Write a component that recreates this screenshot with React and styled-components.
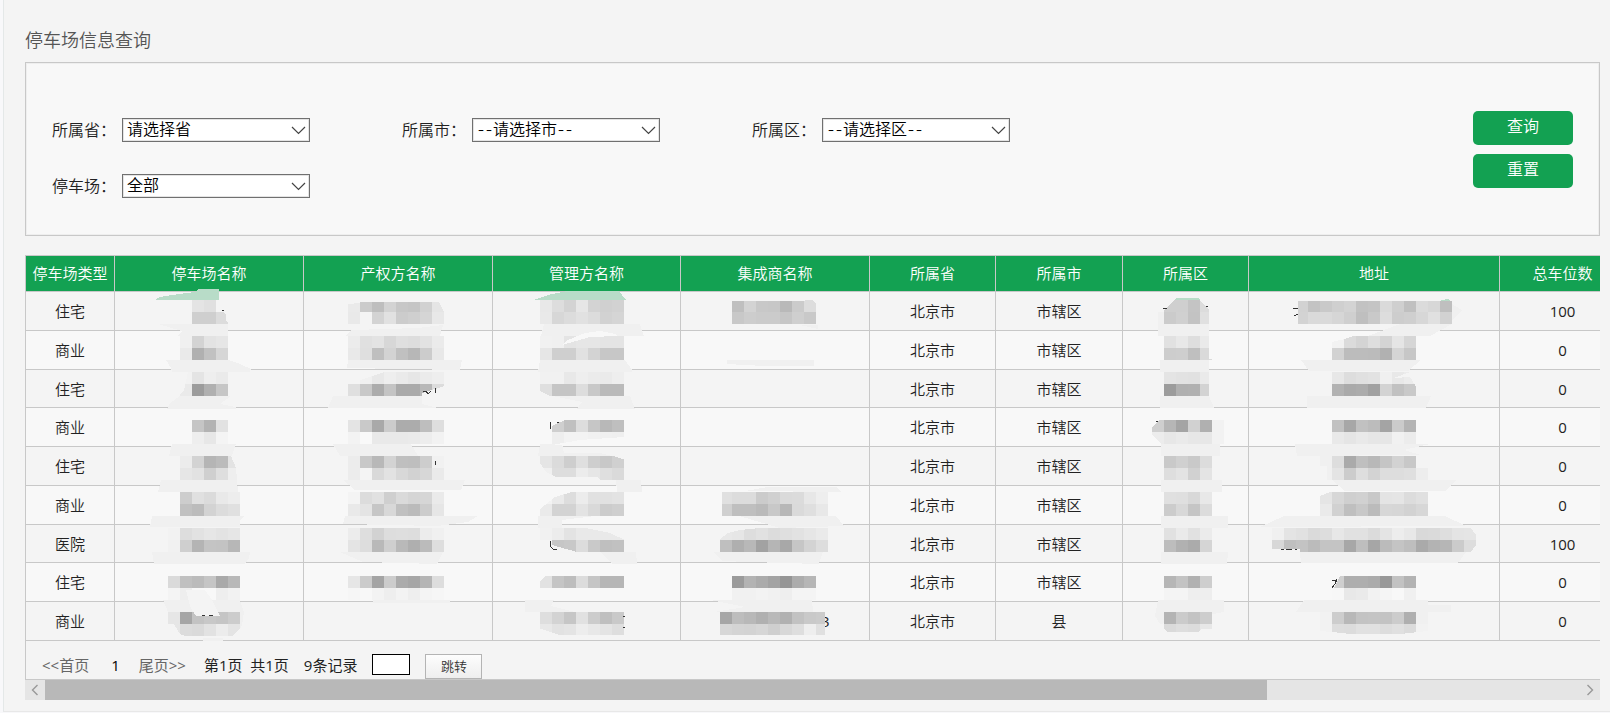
import React from "react"
import styled, { createGlobalStyle } from "styled-components"

const cjk = `"Noto Sans CJK SC", "Noto Sans", sans-serif`
const font = `"Open Sans", ${cjk}`
const green = "#13a152"
const line = "#c8c8c8"

const GlobalStyle = createGlobalStyle`
  * {
    box-sizing: border-box;
  }
  body {
    margin: 0;
    background: #f8f8fa;
    font-family: ${font};
    font-weight: 350;
    font-size: 15px;
    color: #222;
  }
  button, input, select {
    font-family: inherit;
    font-weight: inherit;
    margin: 0;
  }
`

const Page = styled.main`
  margin-left: 3px;
  padding: 26px 10px 11px 21px;
  background: #f4f4f4;
  border-left: 1px solid #e4e8e8;
  border-bottom: 1px solid #e8e8e8;
`

const Title = styled.h1`
  margin: 0 0 8px;
  font-size: 18px;
  font-weight: 350;
  line-height: 28px;
  color: #555;
`

const Filter = styled.form`
  display: flex;
  justify-content: space-between;
  align-items: flex-start;
  min-height: 174px;
  padding: 48px 26px 36px;
  background: #f8f8f8;
  border: 1px solid ${line};
  box-shadow: inset 0 0 0 1px #eeeeee;
`

const Fields = styled.div`
  display: grid;
  grid-template-columns: repeat(3, 350px);
  row-gap: 32px;
  padding-top: 7px;
`

const Field = styled.div`
  display: flex;
  align-items: center;
  height: 24px;
`

const Label = styled.label`
  width: 70px;
  font-size: 16px;
  line-height: 24px;
  white-space: nowrap;
`

const SelectBox = styled.div`
  position: relative;
  width: 188px;
  height: 24px;

  svg {
    position: absolute;
    right: 4px;
    top: 8px;
    pointer-events: none;
  }
`

const Select = styled.select`
  display: block;
  width: 100%;
  height: 24px;
  padding: 0 24px 4px 4px;
  appearance: none;
  border: 1px solid #707070;
  border-radius: 0;
  box-shadow: inset 0 0 0 1px #e4e4e4;
  background: #fff;
  color: #000;
  font-family: ${cjk};
  font-size: 16px;
  line-height: 18px;
  font-feature-settings: "hwid";
`

const Actions = styled.div`
  display: flex;
  flex-direction: column;
  gap: 9px;
`

const ActionButton = styled.button`
  width: 100px;
  height: 34px;
  padding: 0 0 4px;
  border: 0;
  border-radius: 5px;
  background: ${green};
  color: #fff;
  font-size: 16px;
  line-height: 24px;
`

const Result = styled.section`
  position: relative;
  margin-top: 19px;
  overflow: hidden;
  border: solid ${line};
  border-width: 1px 0 1px 1px;
`

const Table = styled.table`
  width: 1600px;
  table-layout: fixed;
  border-collapse: separate;
  border-spacing: 0;
`

const Th = styled.th`
  height: 36px;
  padding: 0 0 1px;
  border-right: 1px solid ${line};
  border-bottom: 1px solid ${line};
  background: ${green};
  color: #fff;
  font-weight: 350;
  line-height: 22px;
  text-align: center;
`

const Row = styled.tr`
  height: 39px;
  background: #f4f4f4;

  &:nth-child(even) {
    background: #f8f8f8;
  }
  &:nth-child(4n + 3) {
    height: 38px;
  }
`

const Td = styled.td`
  padding: 0;
  border-right: 1px solid ${line};
  border-bottom: 1px solid ${line};
  font-weight: ${props => (props.$number ? 400 : 350)};
  line-height: 22px;
  text-align: center;
`

const Mosaic = styled.svg`
  position: absolute;
  top: -1px;
  left: -1px;
  pointer-events: none;
`

const Pager = styled.nav`
  display: flex;
  align-items: flex-start;
  gap: 15px;
  height: 38px;
  padding: 13px 0 0 16px;
  font-weight: 400;
  line-height: 22px;
  white-space: nowrap;
`

const PageLink = styled.a`
  margin-right: 3px;
  color: #666;
  text-decoration: none;
`

const Current = styled.span`
  margin: 0 4px;
  color: #000;
`

const Info = styled.span`
  white-space: pre;
`

const PageInput = styled.input`
  width: 38px;
  height: 21px;
  padding: 0 2px;
  border: 1px solid #000;
  border-radius: 0;
  background: #fff;
`

const JumpButton = styled.button`
  width: 57px;
  height: 25px;
  padding: 0 0 2px;
  border: 1px solid #b4b4b4;
  background: linear-gradient(#fdfdfd, #eeeeee);
  color: #333;
  font-size: 13px;
  font-weight: 350;
  line-height: 20px;
`

const Scrollbar = styled.div`
  display: flex;
  height: 20px;
  background: #e5e5e5;
`

const ScrollButton = styled.button`
  display: flex;
  align-items: center;
  justify-content: center;
  width: 20px;
  height: 20px;
  padding: 0;
  border: 0;
  background: #e5e5e5;
`

const Thumb = styled.div`
  flex: 1222;
  background: #b8b8b8;
`

const Track = styled.div`
  flex: 313;
`

const widths = [89, 189, 189, 188, 189, 126, 127, 126, 251, 126]

const heads = [
  "停车场类型",
  "停车场名称",
  "产权方名称",
  "管理方名称",
  "集成商名称",
  "所属省",
  "所属市",
  "所属区",
  "地址",
  "总车位数",
]

const lots = [
  { type: "住宅", city: "市辖区", total: 100 },
  { type: "商业", city: "市辖区", total: 0 },
  { type: "住宅", city: "市辖区", total: 0 },
  { type: "商业", city: "市辖区", total: 0 },
  { type: "住宅", city: "市辖区", total: 0 },
  { type: "商业", city: "市辖区", total: 0 },
  { type: "医院", city: "市辖区", total: 100 },
  { type: "住宅", city: "市辖区", total: 0 },
  { type: "商业", city: "县", total: 0 },
]

// strips of 12px blocks: x, y, grey levels
const strips = [
  // 停车场名称
  [192, 300, "e4 e0"],
  [192, 312, "cf cf dc"],
  [180, 336, "f0 d3 e3 e6"],
  [180, 348, "ea b0 c1 d6"],
  [180, 372, "f2 e4 ee ea"],
  [180, 384, "ea 9c b0 c6"],
  [192, 420, "c5 b3 e2"],
  [192, 432, "ee e7 f4"],
  [180, 456, "ec d3 b5 bb e3"],
  [180, 468, "e6 e2 cf de ee"],
  [180, 492, "cd e0 db e9 ed"],
  [180, 504, "c1 bc d3 dc e0"],
  [168, 528, "f2 dd e2 e6 e3 e6"],
  [168, 540, "f1 cf b4 c4 c3 b7"],
  [168, 576, "da c0 bb c5 a9 b8"],
  [168, 588, "f4 ee f8 f8 ee f2"],
  [168, 612, "e6 a6 c3 c8 c5 cc"],
  [168, 624, "e6 dc da e2 ec e4"],
  // 产权方名称
  [348, 300, "ea cb be d3 c7 c5 d1 e5"],
  [348, 312, "e9 f4 d3 e1 cc cf d5 e8"],
  [348, 336, "ec e0 e3 d7 df dd e2 eb"],
  [348, 348, "e9 df bf d3 c0 b7 cc e8"],
  [360, 372, "f0 e8 ee ea e6 eb ee"],
  [348, 384, "df c8 ac c4 aa aa b8 dc"],
  [348, 420, "e4 c9 a9 cc ac ac be de"],
  [348, 432, "f3 f9 e9 e9 e9 ea ed f2"],
  [348, 456, "ec c8 b8 d3 bf be cd f1"],
  [348, 468, "ec f4 d9 e2 d8 d2 d7 ea"],
  [348, 492, "f4 dc e1 cf da d5 d6 ea"],
  [348, 504, "e9 e4 c6 d8 c0 bb cc e6"],
  [348, 528, "ec de d2 dd de dd ec f0"],
  [348, 540, "e4 dd b9 cf b9 af bb de"],
  [348, 576, "e6 cb a4 cc ab a6 b5 dd"],
  [348, 588, "f6 f8 f3 ee f3 ee f4 f6"],
  // 管理方名称
  [540, 300, "e8 dd d3 e6 d3 d0 d2"],
  [540, 312, "e9 d7 dc e1 dc d2 d5"],
  [540, 336, "f1 f0 e4 e6 e6 e4 e4"],
  [540, 348, "e6 cf cf e1 d3 c7 c7"],
  [540, 372, "f1 f1 e8 ee eb ea ee"],
  [540, 384, "df c5 c5 dd c8 ba ba"],
  [552, 420, "cf c0 dd c6 b8 bf"],
  [552, 432, "ee f3 f3 f1 f0 ef"],
  [540, 456, "e5 db ce df ce c8 d0"],
  [540, 468, "f0 dd dd ec e6 df da"],
  [540, 492, "f3 ea dd ec e1 e1 e3"],
  [540, 504, "ea d3 d3 e3 d9 cc cf"],
  [540, 528, "f1 ec e3 e9 e9 e9 e9"],
  [552, 540, "c6 c8 dc c9 bf c1"],
  [540, 576, "e2 c5 bd dc c5 b6 b6"],
  [540, 612, "de d3 c6 e1 cc bf c9"],
  [540, 624, "e8 e2 e4 ed e8 e4 de"],
  // 集成商名称
  [732, 300, "bf d3 c8 c7 b9 cb dd"],
  [732, 312, "c8 cd cb cb c6 cf c9"],
  [720, 492, "e0 dc dc cb d0 da db e7 ee"],
  [720, 504, "d0 bf bf ba c8 b7 da df e8"],
  [720, 528, "e8 e6 dd e1 dc df e2 e6 ea"],
  [720, 540, "bf af b8 a2 b5 a8 c6 d3 dd"],
  [732, 576, "9b b3 ab a3 95 ac b6"],
  [732, 588, "f1 f1 f3 f1 ee f4 f4"],
  [720, 612, "a6 bd b8 b0 b9 b1 c2 c9 cb"],
  [720, 624, "d7 d4 d3 d6 cf d8 de ee e0"],
  // 所属区
  [1164, 300, "cf cf c4 dc"],
  [1164, 312, "cb d0 c3 e0"],
  [1164, 336, "e1 e8 de ea"],
  [1164, 348, "cd ce bf da"],
  [1164, 372, "e4 e2 e1 ea"],
  [1164, 384, "9c b0 b1 d3"],
  [1152, 420, "cf b6 a4 d1 b0 f2"],
  [1152, 432, "ec e7 ea e7 e7 f2"],
  [1164, 456, "c9 d0 c9 dc"],
  [1164, 468, "de e3 d1 e4"],
  [1164, 492, "e0 df d8 e8"],
  [1164, 504, "cc d8 c5 dc"],
  [1164, 528, "e1 ea e1 eb"],
  [1164, 540, "bd b1 ab d5"],
  [1164, 576, "b6 c3 b1 ce"],
  [1164, 588, "f4 f4 ee ee"],
  [1164, 612, "b4 cb c3 cd"],
  [1164, 624, "da de dc e7"],
  // 地址
  [1296, 300, "d2 c3 c9 cf d3 c2 c4 da cf c0 db d7 bf"],
  [1296, 312, "d3 da da d6 cf bf c9 dd cd cf d7 e0 d2"],
  [1332, 336, "f2 db d4 de d4 e5 d6"],
  [1332, 348, "d2 bc bc bb b1 d5 c7"],
  [1332, 372, "e7 dd e0 e2 f0 e8 ec"],
  [1332, 384, "b2 aa ac a1 d3 c1 c9"],
  [1332, 420, "c1 a7 c1 bc a4 cb b4"],
  [1332, 432, "e9 e5 e9 e6 e6 f1 ec"],
  [1320, 456, "f0 dd aa bf b8 c5 d2 c8"],
  [1320, 468, "f0 e4 cc de d3 dd dd df ed"],
  [1320, 492, "e5 d7 cf d1 c8 e4 e5 dc e0"],
  [1320, 504, "ea d1 bf c8 bb d7 d6 d2 d7"],
  [1272, 528, "f0 e4 e1 da dd e7 e1 e1 db e4 ed e8 d9 da de e4 e5"],
  [1272, 540, "d7 bf c3 bb c4 c4 a7 be a6 bb c4 be aa b3 b6 cb dd"],
  [1332, 576, "cf ae ae ab 98 c2 b3"],
  [1332, 588, "f7 e8 ea f2 f5 f8 f0"],
  [1320, 612, "f2 cd b8 c3 c4 c3 cc af f0"],
  [1320, 624, "f2 dd dc e1 e1 dd e0 db f2"],
]

// brush edges running across the grid lines
const smears = [
  "158,324 228,324 228,336 178,336 182,331",
  "166,360 228,360 240,364 251,369 250,372 172,372 171,368",
  "180,396 231,396 220,404 236,407 236,409 167,409 170,403",
  "172,444 236,444 232,456 169,456",
  "161,480 237,480 238,492 158,492",
  "152,516 244,516 240,520 240,527 150,527",
  "152,552 250,552 249,558 245,564 154,564",
  "163,600 189,600 193,612 168,612",
  "212,600 240,600 244,612 242,625 236,636 240,612 218,612",
  "203,638 223,638 223,641 203,641",
  "352,330 418,328 443,325 440,336 345,336",
  "348,360 462,360 460,370 347,368",
  "333,396 422,396 422,404 438,408 328,408",
  "333,444 411,444 418,456 340,456",
  "343,480 465,480 461,490 355,490",
  "345,516 478,516 468,522 437,526 343,524",
  "340,552 443,552 437,564 363,562",
  "373,600 450,600 450,603 373,603",
  "544,324 640,324 644,336 541,336",
  "540,360 625,360 632,370 632,372 538,372",
  "552,396 630,396 635,409 577,409 582,402",
  "540,444 562,444 564,453 600,453 620,458 538,456",
  "616,480 641,480 642,492 617,492",
  "538,516 595,516 562,520 562,528 538,528",
  "600,552 636,552 637,564 613,564",
  "525,600 554,600 551,606 575,612 525,612",
  "727,360 814,360 814,366 764,366 727,364",
  "800,325 818,325 818,329",
  "745,491 768,487 836,487 841,492",
  "739,516 836,516 844,526 780,528",
  "714,552 823,552 819,564 750,562 722,561",
  "711,600 812,600 813,612 714,612 745,607",
  "1158,312 1164,312 1164,324 1209,324 1209,336 1158,336",
  "1160,360 1209,360 1209,372 1160,372",
  "1160,396 1209,396 1214,408 1160,408",
  "1161,444 1220,444 1220,456 1161,456",
  "1161,480 1222,480 1222,492 1161,492",
  "1161,516 1228,516 1228,528 1161,528",
  "1161,552 1228,552 1227,564 1161,564",
  "1158,600 1224,600 1224,612 1160,624 1155,616",
  "1368,336 1400,324 1452,324 1430,336",
  "1452,304 1462,310 1452,320",
  "1301,360 1421,360 1408,371 1309,371",
  "1307,396 1431,396 1426,408 1307,408",
  "1295,444 1430,444 1404,450 1421,455 1297,456",
  "1332,480 1457,480 1445,491 1345,491",
  "1284,516 1445,516 1466,526 1260,527",
  "1300,552 1466,552 1458,563 1301,563",
  "1304,600 1428,600 1428,605 1451,605 1451,612 1296,612",
]

// row background showing through at the blob corners
const cuts = [
  ["348,300 443,300 443,302 360,302 360,303 348,304", "#f4f4f4"],
  ["438,300 445,300 445,314", "#f4f4f4"],
  ["219,300 229,300 229,324 226,320 226,315 220,309", "#f4f4f4"],
  ["180,372 188,372 184,390 180,394", "#f4f4f4"],
  ["732,299 805,299 805,301 732,301", "#f4f4f4"],
  ["812,300 817,300 817,304", "#f4f4f4"],
  ["360,372 385,372 360,380", "#f4f4f4"],
  ["422,393 445,386 445,396 422,396", "#f4f4f4"],
  ["186,590 205,590 212,600 220,616 196,616 190,606", "#f4f4f4"],
  ["231,456 241,456 241,480 237,480 236,468", "#f4f4f4"],
  ["168,624 174,624 180,634 188,637 168,637", "#f4f4f4"],
  ["241,628 241,637 232,636", "#f4f4f4"],
  ["540,391 552,397 540,397", "#f4f4f4"],
  ["552,419 567,419 552,426", "#f8f8f8"],
  ["624,437 624,445 552,445 580,440", "#f8f8f8"],
  ["562,345 568,340 585,333 600,331 615,334 618,336 590,337", "#f8f8f8"],
  ["610,455 625,455 625,460", "#f4f4f4"],
  ["540,463 540,480 600,480 597,477 556,477 546,472", "#f4f4f4"],
  ["539,491 575,491 555,497 540,509", "#f8f8f8"],
  ["580,527 625,527 625,540 610,533", "#f4f4f4"],
  ["552,545 577,552 552,552", "#f4f4f4"],
  ["539,575 546,575 539,582", "#f8f8f8"],
  ["539,628 565,637 539,637", "#f4f4f4"],
  ["719,491 722,491 722,516 719,516", "#f8f8f8"],
  ["719,527 770,527 740,530 728,533 719,540", "#f4f4f4"],
  ["825,612 829,612 829,636 825,636", "#f4f4f4"],
  ["720,635 829,635 829,637 720,637", "#f4f4f4"],
  ["540,635 625,635 625,637 540,637", "#f4f4f4"],
  ["1163,299 1176,299 1163,311", "#f4f4f4"],
  ["1199,299 1213,299 1213,325 1209,325 1209,310", "#f4f4f4"],
  ["1209,335 1213,335 1213,359 1209,359", "#f8f8f8"],
  ["1209,372 1213,372 1213,396 1209,396", "#f4f4f4"],
  ["1151,419 1160,419 1151,428", "#f8f8f8"],
  ["1151,434 1162,444 1151,445", "#f8f8f8"],
  ["1163,628 1168,632 1190,632 1198,632 1202,629 1213,629 1213,637 1163,637", "#f4f4f4"],
  ["1296,299 1453,299 1453,301 1296,301", "#f4f4f4"],
  ["1295,299 1298,299 1298,325 1295,325", "#f4f4f4"],
  ["1332,342 1345,339 1356,335 1332,335", "#f8f8f8"],
  ["1394,378 1410,372 1417,372 1417,388 1410,377", "#f4f4f4"],
  ["1320,466 1327,466 1327,480 1320,480", "#f4f4f4"],
  ["1320,491 1333,491 1320,496", "#f8f8f8"],
  ["1470,527 1477,527 1477,536", "#f4f4f4"],
  ["1477,544 1477,553 1470,553", "#f4f4f4"],
  ["1271,549 1300,549 1300,552 1271,552", "#f4f4f4"],
  ["1332,576 1340,576 1334,588 1332,588", "#f8f8f8"],
  ["1319,631 1332,632 1350,634 1400,634 1428,631 1428,637 1319,637", "#f4f4f4"],
]

// stroke ends left visible beside the blobs
const marks =
  "M222 310h2M423 392l3-1 2 3 3-3M435 388v5M435 461v4M550 422v7M557 422h2M550 541v5l3 3h4M623 616h2M623 627h2M1163 308h4M1206 306h2M1156 421h2M1293 308h5M1294 316l4-2M1281 549h3M1286 549h6M1295 549h2M1332 580h4M1337 579l-2 5-3 4M202 615h3M209 615h4"

const Censor = () => (
  <Mosaic
    width="1575"
    height="400"
    viewBox="25 255 1575 400"
    shapeRendering="crispEdges"
    aria-hidden="true"
  >
    <clipPath id="tail">
      <rect x="825" y="612" width="8" height="20" />
    </clipPath>
    {smears.map(points => (
      <polygon key={points} points={points} fill="#f0f0f0" />
    ))}
    {strips.map(([x, y, levels]) =>
      levels
        .split(" ")
        .map((v, i) => (
          <rect
            key={`${x}-${y}-${i}`}
            x={x + i * 12}
            y={y}
            width="12"
            height="12"
            fill={`#${v}${v}${v}`}
          />
        ))
    )}
    {cuts.map(([points, fill]) => (
      <polygon key={points} points={points} fill={fill} />
    ))}
    <g fill="#b8dcc8">
      <polygon points="155,300 160,297 172,295 195,292 198,289 219,289 219,300" />
      <polygon points="534,300 548,295 567,291 619,291 626,300" />
      <polygon points="1176,298 1199,298 1200,300 1174,300" />
      <polygon points="1441,300 1449,299 1450,301 1441,301" />
    </g>
    <path d={marks} fill="none" stroke="#333" />
    <text
      x="821"
      y="627"
      fontSize="15"
      fontWeight="400"
      fill="#222"
      clipPath="url(#tail)"
    >
      3
    </text>
  </Mosaic>
)

const SelectField = ({ id, label, text }) => (
  <Field>
    <Label htmlFor={id}>{label}：</Label>
    <SelectBox>
      <Select id={id}>
        <option>{text}</option>
      </Select>
      <svg width="15" height="9" viewBox="0 0 15 9">
        <path d="M1 1l6.5 6.5L14 1" fill="none" stroke="#444" strokeWidth="1.2" />
      </svg>
    </SelectBox>
  </Field>
)

const Arrow = ({ d }) => (
  <svg width="8" height="12" viewBox="0 0 8 12">
    <path d={d} fill="none" stroke="#999" strokeWidth="1.4" />
  </svg>
)

const App = () => (
  <>
    <GlobalStyle />
    <Page>
      <Title>停车场信息查询</Title>
      <Filter onSubmit={e => e.preventDefault()}>
        <Fields>
          <SelectField id="province" label="所属省" text="请选择省" />
          <SelectField id="city" label="所属市" text="--请选择市--" />
          <SelectField id="district" label="所属区" text="--请选择区--" />
          <SelectField id="parking" label="停车场" text="全部" />
        </Fields>
        <Actions>
          <ActionButton type="submit">查询</ActionButton>
          <ActionButton type="reset">重置</ActionButton>
        </Actions>
      </Filter>
      <Result>
        <Table>
          <colgroup>
            {widths.map((w, i) => (
              <col key={i} width={w} />
            ))}
          </colgroup>
          <thead>
            <tr>
              {heads.map(h => (
                <Th key={h}>{h}</Th>
              ))}
            </tr>
          </thead>
          <tbody>
            {lots.map((lot, i) => (
              <Row key={i}>
                <Td>{lot.type}</Td>
                <Td />
                <Td />
                <Td />
                <Td />
                <Td>北京市</Td>
                <Td>{lot.city}</Td>
                <Td />
                <Td />
                <Td $number>{lot.total}</Td>
              </Row>
            ))}
          </tbody>
        </Table>
        <Censor />
        <Pager>
          <PageLink href="#first">&lt;&lt;首页</PageLink>
          <Current>1</Current>
          <PageLink href="#last">尾页&gt;&gt;</PageLink>
          <Info>{"第1页  共1页"}</Info>
          <Info>9条记录</Info>
          <PageInput type="text" aria-label="页码" />
          <JumpButton type="button">跳转</JumpButton>
        </Pager>
      </Result>
      <Scrollbar>
        <ScrollButton type="button" aria-label="向左">
          <Arrow d="M6.5 1L1.5 6l5 5" />
        </ScrollButton>
        <Thumb />
        <Track />
        <ScrollButton type="button" aria-label="向右">
          <Arrow d="M1.5 1l5 5-5 5" />
        </ScrollButton>
      </Scrollbar>
    </Page>
  </>
)

export default App
